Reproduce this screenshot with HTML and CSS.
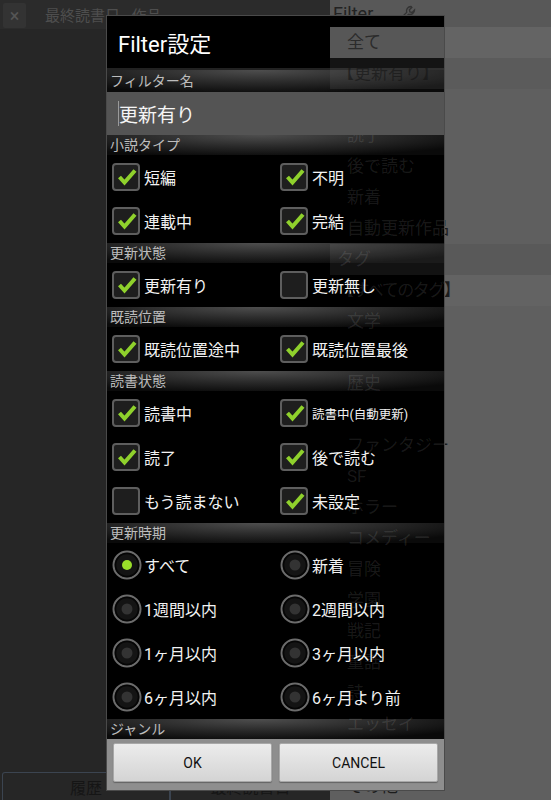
FILE: index.html
```html
<!DOCTYPE html>
<html lang="ja">
  <head>
    <meta charset="UTF-8" />
    <meta name="viewport" content="width=device-width, initial-scale=1.0" />
    <title>Filter設定</title>
    <link rel="stylesheet" href="styles.css">
  </head>
  <body>
    <svg class="defs" xmlns="http://www.w3.org/2000/svg">
      <symbol id="box-on" viewBox="0 0 28 28">
        <rect x="1" y="1" width="26" height="26" rx="3" fill="#1e1e1e" stroke="#5e5e5e" stroke-width="2"/>
        <path d="M7.5 14 L12.5 19.5 L23 7.5" fill="none" stroke="#8fd12c" stroke-width="4"/>
      </symbol>
      <symbol id="box-off" viewBox="0 0 28 28">
        <rect x="1" y="1" width="26" height="26" rx="3" fill="#1e1e1e" stroke="#5e5e5e" stroke-width="2"/>
      </symbol>
      <symbol id="radio-on" viewBox="0 0 30 30">
        <circle cx="15" cy="15" r="13.5" fill="#141414" stroke="#6c6c6c" stroke-width="2"/>
        <circle cx="15" cy="15" r="11.5" fill="none" stroke="#050505" stroke-width="1.5"/>
        <circle cx="15" cy="15" r="5" fill="#9ade2a"/>
      </symbol>
      <symbol id="radio-off" viewBox="0 0 30 30">
        <circle cx="15" cy="15" r="13.5" fill="#141414" stroke="#6c6c6c" stroke-width="2"/>
        <circle cx="15" cy="15" r="11.5" fill="none" stroke="#050505" stroke-width="1.5"/>
        <circle cx="15" cy="15" r="5.5" fill="#333"/>
      </symbol>
    </svg>

    <div class="screen">
      <div class="main">
        <div class="topbar">
          <span class="close">×</span>
          <span class="sort">最終読書日 - 作品</span>
        </div>
        <div class="main-body"></div>
        <div class="tabs">
          <div class="tab tab-on">履歴</div>
          <div class="tab">最終読書日</div>
        </div>
      </div>

      <div class="panel">
        <div class="panel-head">
          Filter
          <svg class="wrench" viewBox="0 0 20 20">
            <path d="M14 2.5a4.5 4.5 0 0 0-4.3 5.9L2.5 15.6l1.9 1.9 7.2-7.2A4.5 4.5 0 0 0 17.5 6l-2.4 2.4-2.2-.4-.5-2.2L14.8 3.4z" fill="none" stroke="#333" stroke-width="1.4"/>
          </svg>
        </div>
        <ul class="plist">
          <li class="hl">全て</li>
          <li class="band">【更新有り】</li>
          <li>読書中</li>
          <li>読了</li>
          <li>後で読む</li>
          <li>新着</li>
          <li>自動更新作品</li>
          <li class="tag-band">タグ</li>
          <li class="tag-all">【すべてのタグ】</li>
          <li>文学</li>
          <li>恋愛</li>
          <li>歴史</li>
          <li>推理</li>
          <li>ファンタジー</li>
          <li>SF</li>
          <li>ホラー</li>
          <li>コメディー</li>
          <li>冒険</li>
          <li>学園</li>
          <li>戦記</li>
          <li>童話</li>
          <li>詩</li>
          <li>エッセイ</li>
          <li>リプレイ</li>
          <li>その他</li>
        </ul>
      </div>
    </div>

    <div class="dialog">
      <div class="dlg-title">Filter設定</div>

      <div class="dlg-body">
        <div class="sect sect-first">フィルター名</div>
        <div class="name"><span class="caret"></span>更新有り</div>

        <div class="sect">小説タイプ</div>
        <div class="opts">
          <span class="opt"><svg class="cb"><use href="#box-on"/></svg>短編</span>
          <span class="opt"><svg class="cb"><use href="#box-on"/></svg>不明</span>
          <span class="opt"><svg class="cb"><use href="#box-on"/></svg>連載中</span>
          <span class="opt"><svg class="cb"><use href="#box-on"/></svg>完結</span>
        </div>

        <div class="sect">更新状態</div>
        <div class="opts">
          <span class="opt"><svg class="cb"><use href="#box-on"/></svg>更新有り</span>
          <span class="opt"><svg class="cb"><use href="#box-off"/></svg>更新無し</span>
        </div>

        <div class="sect">既読位置</div>
        <div class="opts">
          <span class="opt"><svg class="cb"><use href="#box-on"/></svg>既読位置途中</span>
          <span class="opt"><svg class="cb"><use href="#box-on"/></svg>既読位置最後</span>
        </div>

        <div class="sect">読書状態</div>
        <div class="opts">
          <span class="opt"><svg class="cb"><use href="#box-on"/></svg>読書中</span>
          <span class="opt small"><svg class="cb"><use href="#box-on"/></svg>読書中(自動更新)</span>
          <span class="opt"><svg class="cb"><use href="#box-on"/></svg>読了</span>
          <span class="opt"><svg class="cb"><use href="#box-on"/></svg>後で読む</span>
          <span class="opt"><svg class="cb"><use href="#box-off"/></svg>もう読まない</span>
          <span class="opt"><svg class="cb"><use href="#box-on"/></svg>未設定</span>
        </div>

        <div class="sect">更新時期</div>
        <div class="opts radios">
          <span class="opt"><svg class="rd"><use href="#radio-on"/></svg>すべて</span>
          <span class="opt"><svg class="rd"><use href="#radio-off"/></svg>新着</span>
          <span class="opt"><svg class="rd"><use href="#radio-off"/></svg>1週間以内</span>
          <span class="opt"><svg class="rd"><use href="#radio-off"/></svg>2週間以内</span>
          <span class="opt"><svg class="rd"><use href="#radio-off"/></svg>1ヶ月以内</span>
          <span class="opt"><svg class="rd"><use href="#radio-off"/></svg>3ヶ月以内</span>
          <span class="opt"><svg class="rd"><use href="#radio-off"/></svg>6ヶ月以内</span>
          <span class="opt"><svg class="rd"><use href="#radio-off"/></svg>6ヶ月より前</span>
        </div>

        <div class="sect">ジャンル</div>
      </div>

      <div class="dlg-buttons">
        <button class="btn">OK</button>
        <button class="btn">CANCEL</button>
      </div>

      <!-- the list behind shows through on the right -->
      <div class="ghost">
        <ul class="plist">
          <li class="hl">全て</li>
          <li class="band">【更新有り】</li>
          <li></li>
          <li>読了</li>
          <li>後で読む</li>
          <li>新着</li>
          <li>自動更新作品</li>
          <li class="tag-band">タグ</li>
          <li class="tag-all">【すべてのタグ】</li>
          <li>文学</li>
          <li></li>
          <li>歴史</li>
          <li></li>
          <li>ファンタジー</li>
          <li>SF</li>
          <li>ホラー</li>
          <li>コメディー</li>
          <li>冒険</li>
          <li>学園</li>
          <li>戦記</li>
          <li>童話</li>
          <li>詩</li>
          <li>エッセイ</li>
        </ul>
      </div>
    </div>
  </body>
</html>
```

FILE: styles.css
```css
body {
  margin: 0;
  background-color: #262626;
  font-family: Roboto, "Noto Sans CJK JP", sans-serif;
}

.defs {
  position: absolute;
  width: 0;
  height: 0;
}

.screen {
  display: flex;
  height: 800px;
  overflow: hidden;
}

/* left side, under the dialog */
.main {
  width: 330px;
  display: flex;
  flex-direction: column;
}

.topbar {
  height: 29px;
  background-color: #2b2b2b;
  display: flex;
  align-items: center;
}

.close {
  width: 23px;
  height: 25px;
  margin: 2px 19px 0 3px;
  border-radius: 2px;
  background-color: #333;
  color: #555;
  font-size: 18px;
  display: flex;
  align-items: center;
  justify-content: center;
}

.sort {
  color: #4e4e4e;
  font-size: 15px;
}

.main-body {
  flex: 1;
}

.tabs {
  height: 28px;
  display: flex;
}

.tab {
  width: 160px;
  display: flex;
  align-items: center;
  justify-content: center;
  color: #151515;
  font-size: 16px;
  border-left: 1px solid #3b4450;
}

.tab-on {
  width: 167px;
  margin-left: 2px;
  border: 1px solid #3b4450;
  border-bottom: none;
  border-radius: 3px 3px 0 0;
}

/* right side list */
.panel {
  flex: 1;
  background-color: #5f5f5f;
}

.panel-head {
  height: 27px;
  background-color: #585858;
  padding-left: 3px;
  display: flex;
  align-items: center;
  gap: 24px;
  font-size: 18px;
  color: #222;
}

.wrench {
  width: 20px;
  height: 20px;
}

.plist {
  list-style: none;
  margin: 0;
  padding: 0;
}

.plist li {
  height: 31px;
  line-height: 31px;
  padding-left: 17px;
  font-size: 17px;
  color: #1c1c1c;
  white-space: nowrap;
}

.plist .hl {
  background-color: #646464;
}

.plist .band {
  background-color: #5b5b5b;
  padding-left: 7px;
}

.plist .tag-band {
  background-color: #595959;
  padding-left: 7px;
}

.plist .tag-all {
  background-color: #636363;
  padding-left: 7px;
  letter-spacing: -1.5px;
}

/* dialog */
.dialog {
  position: absolute;
  top: 15px;
  left: 106px;
  width: 337px;
  border: 1px solid #4a4a4a;
  background-color: #000;
}

.dlg-title {
  height: 52px;
  padding-left: 11px;
  display: flex;
  align-items: center;
  border-bottom: 2px solid #222;
  color: #fff;
  font-size: 22px;
}

.dlg-body {
  height: 669px;
  overflow: hidden;
}

.sect {
  height: 20px;
  line-height: 20px;
  padding-left: 3px;
  font-size: 14px;
  color: #bdbdbd;
  background: radial-gradient(ellipse 70% 110% at 45% 0%, #4e4e4e 0%, #2b2b2b 50%, #0a0a0a 100%);
}

.sect-first {
  height: 22px;
  line-height: 22px;
}

.name {
  position: relative;
  z-index: 2;
  height: 43px;
  padding-left: 11px;
  display: flex;
  align-items: center;
  background-color: #545454;
  color: #f5f5f5;
  font-size: 19px;
}

.caret {
  width: 1px;
  height: 25px;
  background-color: #9a9a9a;
}

.opts {
  display: grid;
  grid-template-columns: 168px 1fr;
  grid-auto-rows: 44px;
  padding-left: 5px;
}

.opt {
  display: flex;
  align-items: center;
  gap: 4px;
  color: #f2f2f2;
  font-size: 16px;
  white-space: nowrap;
}

.opt.small {
  font-size: 12.5px;
}

.cb {
  width: 28px;
  height: 28px;
}

.radios .opt {
  gap: 2px;
}

.rd {
  width: 30px;
  height: 30px;
}

.dlg-buttons {
  height: 51px;
  box-sizing: border-box;
  padding: 4px 6px 0;
  display: flex;
  gap: 7px;
  background-color: #8e8e8e;
}

.btn {
  width: 159px;
  height: 39px;
  border: 1px solid #a8a8a8;
  border-radius: 2px;
  background: linear-gradient(#ececec, #d4d4d4);
  box-shadow: 0 1px 1px rgba(0, 0, 0, 0.3);
  font-family: Roboto, sans-serif;
  font-size: 14px;
  color: #111;
}

/* faint copy of the list showing through the dialog */
.ghost {
  position: absolute;
  top: 0;
  left: 223px;
  width: 114px;
  height: 723px;
  overflow: hidden;
  z-index: 1;
  pointer-events: none;
}

.ghost .plist {
  margin-top: 11px;
}

.ghost .plist li {
  color: rgba(255, 255, 255, 0.1);
}

.ghost .plist .hl {
  background-color: #575757;
  color: #2b2b2b;
}

.ghost .plist .band {
  background-color: rgba(110, 110, 110, 0.18);
  color: rgba(20, 20, 20, 0.6);
}

.ghost .plist .tag-band {
  background-color: rgba(255, 255, 255, 0.07);
}

.ghost .plist .tag-all {
  background-color: transparent;
}
```
